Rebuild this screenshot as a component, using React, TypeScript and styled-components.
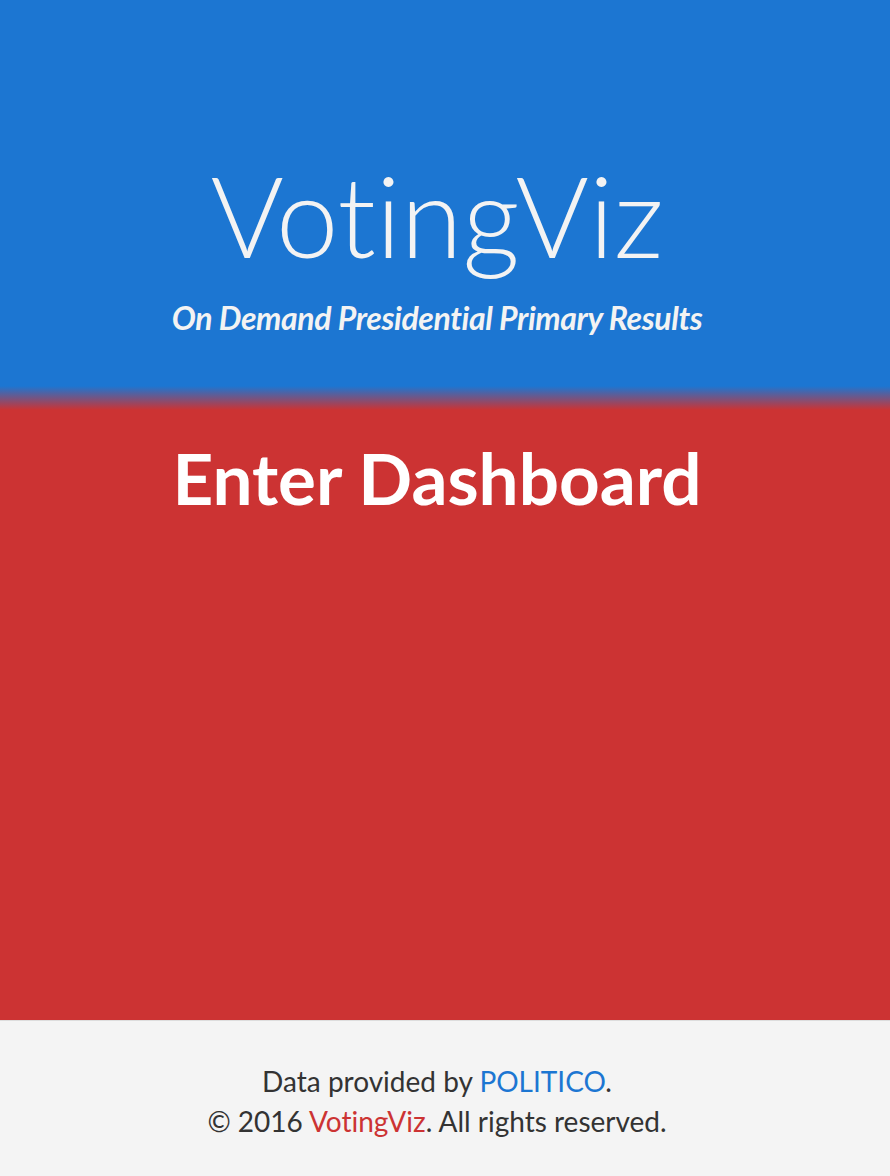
import React from "react";
import styled, { createGlobalStyle } from "styled-components";

const Global = createGlobalStyle`
  html, body { margin: 0; padding: 0; }
  body {
    font-family: Lato, "Open Sans", sans-serif;
    background: #f4f4f4;
    font-variant-ligatures: none;
  }
`;

const Page = styled.div`
  display: flex;
  flex-direction: column;
  min-height: 1176px;
`;

const Hero = styled.main`
  height: 1020px;
  box-sizing: border-box;
  padding-right: 16px;
  display: flex;
  flex-direction: column;
  align-items: center;
  background: linear-gradient(
    to bottom,
    #1c76d2 0px,
    #1c76d2 386px,
    #cc3333 410px,
    #cc3333 100%
  );
  color: #f5f5f5;
`;

const Title = styled.h1`
  margin: 159px 0 0;
  font-family: Lato, sans-serif;
  font-weight: 300;
  font-size: 112px;
  line-height: 1;
  color: #f3f3f3;
  font-variant-ligatures: none;
`;

const Subtitle = styled.h2`
  margin: 31px 0 0;
  font-family: Lato, sans-serif;
  font-style: italic;
  font-weight: 700;
  font-size: 32px;
  line-height: 1;
  color: #f3f3f3;
  letter-spacing: -0.4px;
  font-variant-ligatures: none;
`;

const EnterLink = styled.a`
  margin-top: 108px;
  font-family: Lato, sans-serif;
  font-weight: 700;
  font-size: 71px;
  line-height: 1;
  color: #ffffff;
  text-decoration: none;
  cursor: pointer;
`;

const Footer = styled.footer`
  flex: 1;
  border-top: 1px solid #dddddd;
  background: #f4f4f4;
  padding: 40px 16px 0 0;
  text-align: center;
  font-family: Lato, sans-serif;
  font-size: 28px;
  line-height: 40px;
  color: #333333;
  font-variant-ligatures: none;
`;

const Line = styled.div``;

const Accent = styled.a<{ $tone: "blue" | "red" }>`
  color: ${(p) => (p.$tone === "blue" ? "#1c76d2" : "#cc3333")};
  text-decoration: none;
`;

export default function App() {
  return (
    <Page>
      <Global />
      <Hero>
        <Title>VotingViz</Title>
        <Subtitle>On Demand Presidential Primary Results</Subtitle>
        <EnterLink>Enter Dashboard</EnterLink>
      </Hero>
      <Footer>
        <Line>
          Data provided by <Accent $tone="blue">POLITICO</Accent>.
        </Line>
        <Line>
          © 2016 <Accent $tone="red">VotingViz</Accent>. All rights reserved.
        </Line>
      </Footer>
    </Page>
  );
}
